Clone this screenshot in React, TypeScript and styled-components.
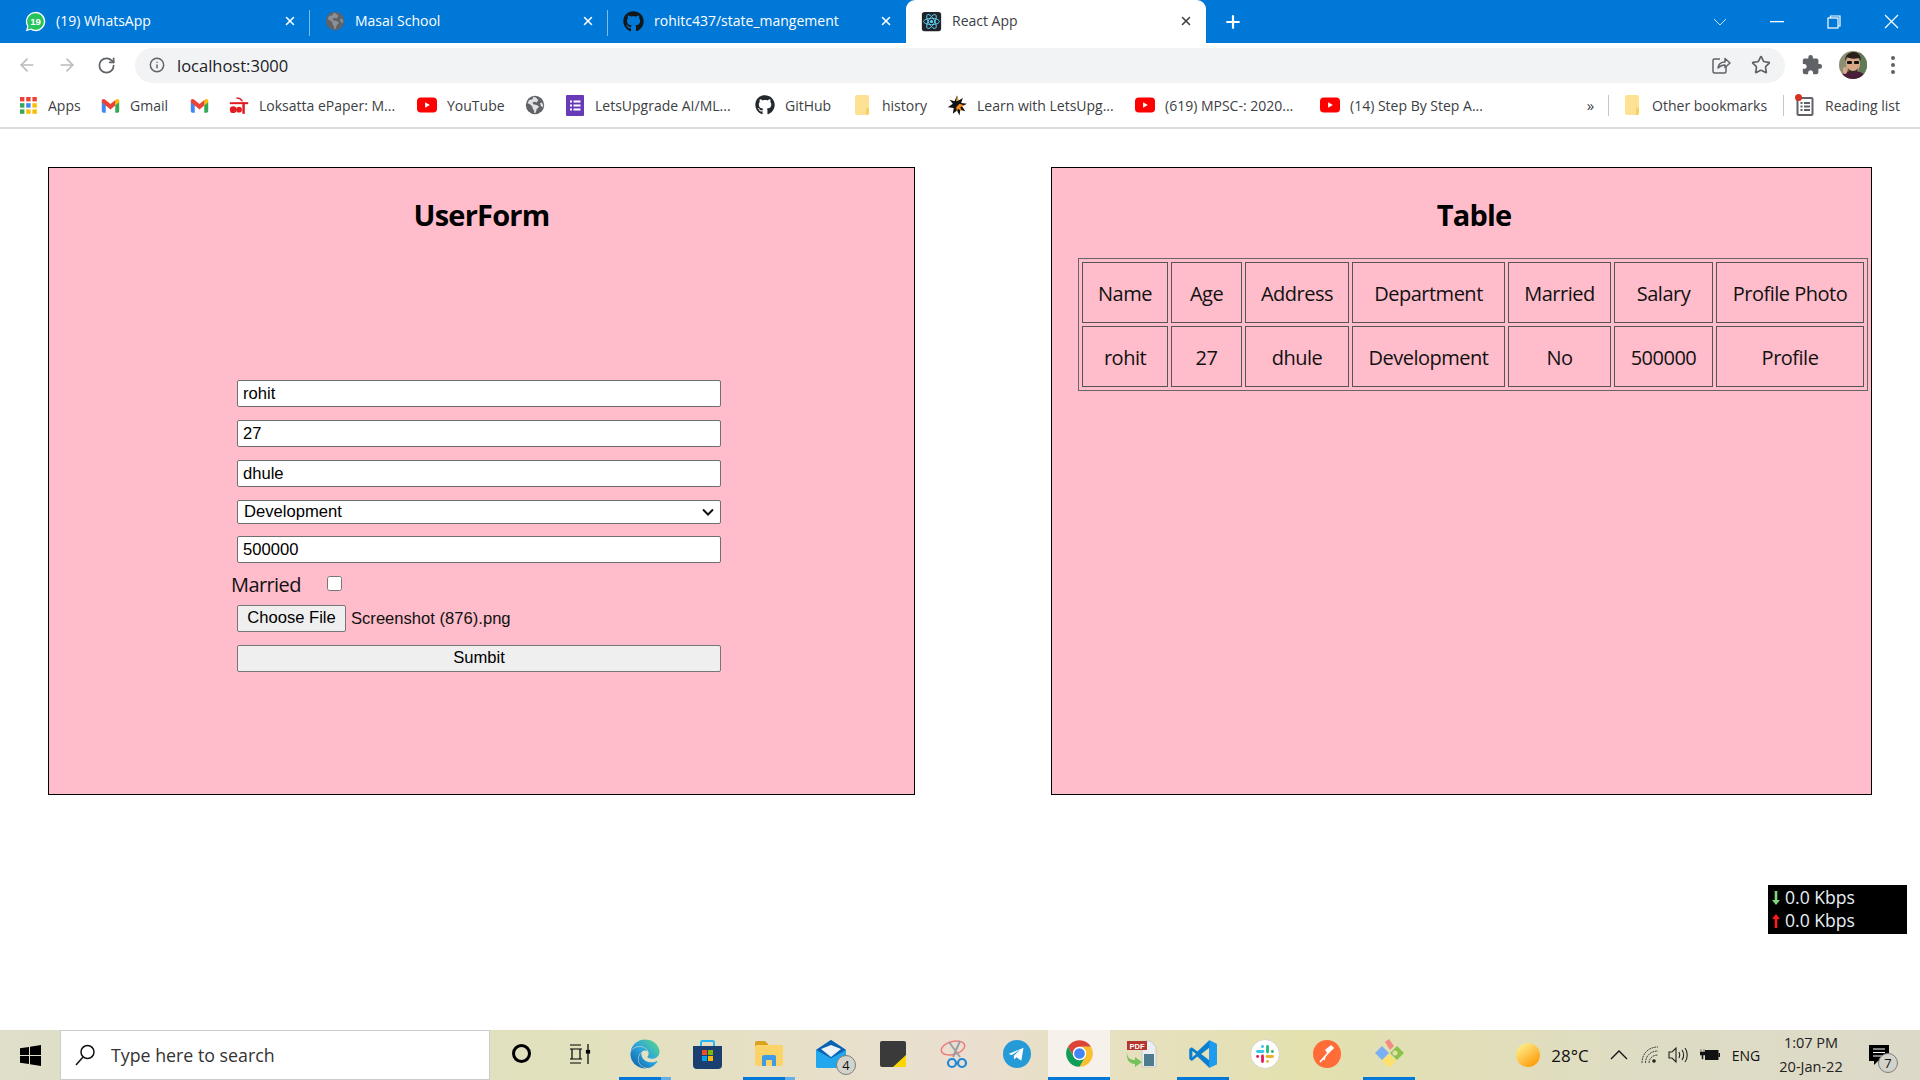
import React from "react";
import styled, { createGlobalStyle } from "styled-components";
import { ArrowLeft, ArrowRight, RotateCw, Info, Star, X, Plus } from "lucide-react";
import { FaGithub, FaEdge } from "react-icons/fa";
import { MdExtension } from "react-icons/md";

const UI = `"Open Sans", "Noto Sans", sans-serif`;
const ARIAL = `"Liberation Sans", Arial, sans-serif`;

const Global = createGlobalStyle`
  html, body { margin: 0; padding: 0; background: #fff; }
  * { box-sizing: border-box; }
`;

/* ---------- small drawn icons ---------- */

const WhatsAppIcon = () => (
  <svg width="21" height="21" viewBox="0 0 24 24">
    <path d="M12 1a11 11 0 0 0-9.400 16.600L1 23l5.600-1.500A11 11 0 1 0 12 1z" fill="#fff" />
    <path d="M12 2.500a9.500 9.500 0 0 0-8 14.600L3 21l3.900-1a9.500 9.500 0 1 0 5.100-17.500z" fill="#25c45d" />
    <text x="12" y="16" fontSize="11" fontWeight="700" fill="#fff" textAnchor="middle" fontFamily={ARIAL}>19</text>
  </svg>
);

const GlobeIcon = ({ land = "#dfe1e5" }: { land?: string }) => (
  <svg width="20" height="20" viewBox="0 0 24 24">
    <circle cx="12" cy="12" r="11" fill="#5f6368" />
    <path d="M10 2l-1 3-4 1-2 4 3 1 3 3v2l2 3v3l2-1 1-4 3-3-3-2-4-1-1-2 3-1 2 1 2-3-3-3zM20 9l-2 1 1 3 2 2 1-3z" fill={land} />
  </svg>
);

const ReactIcon = () => (
  <svg width="21" height="21" viewBox="0 0 24 24">
    <rect x="1" y="1" width="22" height="22" rx="3" fill="#20232a" />
    <circle cx="12" cy="12" r="1.800" fill="#61dafb" />
    <g fill="none" stroke="#61dafb" strokeWidth="1">
      <ellipse cx="12" cy="12" rx="9" ry="3.600" />
      <ellipse cx="12" cy="12" rx="9" ry="3.600" transform="rotate(60 12 12)" />
      <ellipse cx="12" cy="12" rx="9" ry="3.600" transform="rotate(120 12 12)" />
    </g>
  </svg>
);

const AppsIcon = () => {
  const colors = ["#ea4335", "#ea4335", "#ea4335", "#34a853", "#4285f4", "#fbbc05", "#34a853", "#fbbc05", "#fbbc05"];
  return (
    <svg width="17" height="17" viewBox="0 0 17 17">
      {colors.map((c, i) => (
        <rect key={i} x={(i % 3) * 6.2} y={Math.floor(i / 3) * 6.2} width="4.400" height="4.400" fill={c} />
      ))}
    </svg>
  );
};

const GmailIcon = () => (
  <svg width="19" height="15" viewBox="0 0 24 18">
    <path d="M1 4v12a2 2 0 0 0 2 2h3V8z" fill="#4285f4" />
    <path d="M23 4v12a2 2 0 0 1-2 2h-3V8z" fill="#34a853" />
    <path d="M18 2v7l5-4V3c0-2-2.500-3-4-1.500z" fill="#fbbc05" />
    <path d="M1 3c0-2 2.500-3 4-1.500L12 7l6-5v7l-6 5-11-9z" fill="#ea4335" />
  </svg>
);

const LoksattaIcon = () => (
  <svg width="21" height="19" viewBox="0 0 24 22">
    <g fill="#e31b23">
      <rect x="1" y="7" width="22" height="2.400" />
      <rect x="16" y="7" width="3" height="14" />
      <circle cx="5" cy="16" r="4" />
      <circle cx="12" cy="16" r="3.500" />
      <path d="M9 1c3 0 6 1 8 5h-2c-1.500-2-3-3-6-3z" />
    </g>
  </svg>
);

const YouTubeIcon = () => (
  <svg width="21" height="16" viewBox="0 0 21 16">
    <rect width="21" height="16" rx="4" fill="#f00" />
    <path d="M8.500 5l5 3-5 3z" fill="#fff" />
  </svg>
);

const FormsIcon = () => (
  <svg width="18" height="21" viewBox="0 0 18 21">
    <rect width="18" height="21" rx="1" fill="#673ab7" />
    <g fill="#fff">
      <rect x="4" y="5.500" width="2" height="2" />
      <rect x="7.500" y="5.500" width="7" height="2" />
      <rect x="4" y="9.500" width="2" height="2" />
      <rect x="7.500" y="9.500" width="7" height="2" />
      <rect x="4" y="13.500" width="2" height="2" />
      <rect x="7.500" y="13.500" width="7" height="2" />
    </g>
  </svg>
);

const FolderBookmark = () => (
  <svg width="16" height="20" viewBox="0 0 16 20">
    <path d="M1 2a2 2 0 0 1 2-2h10a2 2 0 0 1 2 2v16a2 2 0 0 1-2 2H3a2 2 0 0 1-2-2z" fill="#fde293" />
    <path d="M13 20a2 2 0 0 0 2-2v-6l-3 2v6z" fill="#f9cf60" />
  </svg>
);

const BurstIcon = () => (
  <svg width="23" height="23" viewBox="0 0 24 24">
    <path d="M12 0l2 6 5-3-2 6 7 1-6 3 4 6-6-2-1 7-3-6-5 4 1-7-7-1 6-4-4-5 6 2z" fill="#111" />
    <path d="M15 10l6 2-5 2 2 5-5-3-1 4-1-6 4-4z" fill="#f58a1f" />
    <path d="M12 0l2 6-3 1z" fill="#f4b63f" />
  </svg>
);

const ReadingListIcon = () => (
  <svg width="20" height="22" viewBox="0 0 20 22">
    <rect x="2.500" y="4" width="15" height="17" rx="1" fill="none" stroke="#5f6368" strokeWidth="2" />
    <g fill="#5f6368">
      <rect x="5.500" y="8" width="2" height="2" />
      <rect x="9" y="8" width="6" height="2" />
      <rect x="5.500" y="11.500" width="2" height="2" />
      <rect x="9" y="11.500" width="6" height="2" />
      <rect x="5.500" y="15" width="2" height="2" />
      <rect x="9" y="15" width="6" height="2" />
    </g>
    <circle cx="3.500" cy="3.500" r="3.500" fill="#d93025" />
  </svg>
);

const ShareIcon = () => (
  <svg width="20" height="20" viewBox="0 0 20 20" fill="none" stroke="#5f6368" strokeWidth="1.500">
    <path d="M9 4H3.500A1.500 1.500 0 0 0 2 5.500v11A1.500 1.500 0 0 0 3.500 18h10a1.500 1.500 0 0 0 1.500-1.500V12" />
    <path d="M7 13c.5-4 3-6 7-6V3.500L19 8l-5 4.500V10c-3 0-5 1-7 3z" strokeLinejoin="round" />
  </svg>
);

const AvatarIcon = () => (
  <svg width="28" height="28" viewBox="0 0 28 28">
    <defs>
      <clipPath id="avatarClip"><circle cx="14" cy="14" r="14" /></clipPath>
    </defs>
    <g clipPath="url(#avatarClip)">
      <rect width="28" height="28" fill="#8c8f72" />
      <rect x="20" width="8" height="28" fill="#5f7a55" />
      <path d="M2 28c0-6 5-8 12-8s12 2 12 8z" fill="#4a1e3a" />
      <ellipse cx="14" cy="13" rx="7" ry="9" fill="#d8a888" />
      <path d="M6 10c0-7 5-9 9-9s7 3 7 9l-2-3c-4 1-9 1-12-1z" fill="#2a1f1c" />
      <rect x="8" y="10" width="5" height="3" rx="1" fill="#111" />
      <rect x="15" y="10" width="5" height="3" rx="1" fill="#111" />
      <path d="M9 17c2 4 8 4 10 0l-1 5h-8z" fill="#3b2a25" />
      <rect x="4" y="16" width="4" height="7" rx="2" fill="#d8a888" />
    </g>
  </svg>
);

const SearchGlass = () => (
  <svg width="22" height="22" viewBox="0 0 22 22" fill="none" stroke="#111" strokeWidth="1.500">
    <circle cx="13.500" cy="8" r="6.500" />
    <path d="M9 13L2 21" />
  </svg>
);

const WindowsLogo = () => (
  <svg width="21" height="21" viewBox="0 0 21 21" fill="#000">
    <path d="M0 3.200L9 2v8H0zM10 1.800L21 0v10H10zM0 11h9v8l-9-1.200zM10 11h11v10l-11-1.800z" />
  </svg>
);

const CortanaIcon = () => (
  <svg width="21" height="21" viewBox="0 0 21 21">
    <circle cx="10.500" cy="10.500" r="8" fill="none" stroke="#000" strokeWidth="3" />
  </svg>
);

const TaskViewIcon = () => (
  <svg width="22" height="20" viewBox="0 0 22 20" fill="none" stroke="#000" strokeWidth="1.200">
    <path d="M1 1h11M1 19h11M3 5h8v10H3zM1 5h12M1 15h12" />
    <path d="M19 0v6M19 9v11" />
    <rect x="17.500" y="6.500" width="3" height="2.500" fill="#000" />
  </svg>
);

const EdgeIcon = styled(FaEdge)`
  width: 30px;
  height: 30px;
  fill: url(#edgeGrad);
`;

const StoreIcon = () => (
  <svg width="29" height="30" viewBox="0 0 29 30">
    <path d="M8 8V3.500A1.500 1.500 0 0 1 9.500 2h10A1.500 1.500 0 0 1 21 3.500V8" fill="none" stroke="#29b6f6" strokeWidth="2" />
    <path d="M0 7h29v19a4 4 0 0 1-4 4H4a4 4 0 0 1-4-4z" fill="#1a3f70" />
    <rect x="9" y="11" width="5" height="5" fill="#f25022" />
    <rect x="15" y="11" width="5" height="5" fill="#7fba00" />
    <rect x="9" y="17" width="5" height="5" fill="#00a4ef" />
    <rect x="15" y="17" width="5" height="5" fill="#ffb900" />
  </svg>
);

const ExplorerIcon = () => (
  <svg width="28" height="25" viewBox="0 0 28 25">
    <path d="M0 2a2 2 0 0 1 2-2h8l3 3v3H0z" fill="#dba121" />
    <rect y="4" width="28" height="21" rx="2" fill="#fbd367" />
    <path d="M7 25v-9a2 2 0 0 1 2-2h10a2 2 0 0 1 2 2v9h-4v-6h-6v6z" fill="#3f9be4" />
  </svg>
);

const MailIcon = () => (
  <svg width="30" height="28" viewBox="0 0 30 28">
    <path d="M0 10L15 0l15 10v16a2 2 0 0 1-2 2H2a2 2 0 0 1-2-2z" fill="#1c97e6" />
    <path d="M0 10L15 0l15 10-15 8z" fill="#0b62b1" />
    <path d="M5 9l10-4 10 4-10 8z" fill="#eef3f8" />
    <path d="M0 10l15 9 15-9v16a2 2 0 0 1-2 2H2a2 2 0 0 1-2-2z" fill="#21a7ee" />
  </svg>
);

const NotesIcon = () => (
  <svg width="26" height="26" viewBox="0 0 26 26">
    <rect width="26" height="26" rx="2" fill="#3a3a3a" />
    <path d="M26 14v12H13z" fill="#ffd500" />
  </svg>
);

const SnipIcon = () => (
  <svg width="30" height="30" viewBox="0 0 30 30" fill="none">
    <ellipse cx="13" cy="9" rx="12" ry="6.500" stroke="#f07a7a" strokeWidth="1.500" transform="rotate(-15 13 9)" />
    <path d="M9 3l11 15M20 2l-7 16" stroke="#9aa0a6" strokeWidth="2" />
    <circle cx="22" cy="24" r="4" stroke="#1e88d8" strokeWidth="2.200" />
    <circle cx="12" cy="24" r="4" stroke="#1e88d8" strokeWidth="2.200" />
  </svg>
);

const TelegramIcon = () => (
  <svg width="28" height="28" viewBox="0 0 28 28">
    <circle cx="14" cy="14" r="14" fill="#249ad6" />
    <path d="M5.500 14l15-6.200-2.200 13-4.800-3.500-2.300 2.200-.4-3.800 6.500-6-8.400 5.200z" fill="#fff" />
  </svg>
);

const ChromeIcon = () => (
  <svg width="29" height="29" viewBox="0 0 24 24">
    <path d="M12 1a11 11 0 0 1 9.530 5.500H12a5.500 5.500 0 0 0-4.760 8.250L2.470 6.500A11 11 0 0 1 12 1z" fill="#db4437" />
    <path d="M21.530 6.500A11 11 0 0 1 12 23l4.760-8.250A5.500 5.500 0 0 0 12 6.500z" fill="#fbc02d" />
    <path d="M12 23A11 11 0 0 1 2.470 6.500l4.770 8.250a5.500 5.500 0 0 0 9.520 0z" fill="#0f9d58" />
    <circle cx="12" cy="12" r="5.500" fill="#fff" />
    <circle cx="12" cy="12" r="4.400" fill="#4285f4" />
  </svg>
);

const PdfIcon = () => (
  <svg width="31" height="28" viewBox="0 0 31 28">
    <path d="M16 1h9l5 6v20H16z" fill="#e9eef0" stroke="#bbb" strokeWidth=".6" />
    <rect x="18" y="14" width="10" height="12" fill="#4d7d8c" />
    <rect x="1" y="1" width="20" height="9" fill="#b5342e" />
    <text x="11" y="8.500" fontSize="7.500" fontWeight="700" fill="#fff" textAnchor="middle" fontFamily={ARIAL}>PDF</text>
    <path d="M1 12c0 6 3 8 8 8v-3l7 5-7 5v-3c-6 0-9-5-8-12z" fill="#76c25a" />
  </svg>
);

const VsCodeIcon = () => (
  <svg width="30" height="30" viewBox="0 0 24 24">
    <path
      fillRule="evenodd"
      d="M17 1l6 2.900v16.200L17 23l-9.500-9L3 17.500 1 16V8l2-1.500L7.500 10zM17 7l-6.500 5 6.500 5zM3.500 9.500v5L6.500 12z"
      fill="#0a7fd0"
    />
    <path d="M17 1l6 2.900v16.200L17 23z" fill="#1f9cf0" />
  </svg>
);

const SlackIcon = () => (
  <svg width="30" height="30" viewBox="0 0 30 30">
    <circle cx="15" cy="15" r="14.500" fill="#fff" stroke="#d5d5c5" />
    <g fill="none" strokeWidth="2.800" strokeLinecap="round">
      <path d="M7.500 12.500h5.500M12.500 7.500v.2" stroke="#36c5f0" />
      <path d="M17.500 7.500v5.500M22.500 12.500h-.2" stroke="#2eb67d" />
      <path d="M22.500 17.500H17M17.500 22.500v-.2" stroke="#ecb22e" />
      <path d="M12.500 22.500V17M7.500 17.500h.2" stroke="#e01e5a" />
    </g>
  </svg>
);

const PostmanIcon = () => (
  <svg width="28" height="28" viewBox="0 0 28 28">
    <circle cx="14" cy="14" r="14" fill="#ff6c37" />
    <path d="M7 22l8-9M13 10l5-4 2 2-5 5zM12 16l-1 4" stroke="#fff" strokeWidth="1.600" fill="#fff" />
  </svg>
);

const KrakenIcon = () => (
  <svg width="31" height="31" viewBox="0 0 31 31">
    <path d="M1 15l7-7 7 7-7 7z" fill="#7cb0f5" />
    <path d="M8 23l7-7 7 7-7 7z" fill="#fbe26f" />
    <path d="M16 15l7-7 7 7-7 7z" fill="#8bc34a" />
    <circle cx="21" cy="15" r="2.500" fill="#e3e1aa" />
    <path d="M11 4l4-3 5 7-4 4z" fill="#f28b82" />
  </svg>
);

const SunIcon = () => (
  <svg width="24" height="24" viewBox="0 0 24 24">
    <defs>
      <linearGradient id="sunGrad" x1="0.2" y1="0.1" x2="0.8" y2="0.9">
        <stop offset="0" stopColor="#fdeb85" />
        <stop offset="1" stopColor="#fe9d0c" />
      </linearGradient>
    </defs>
    <circle cx="12" cy="12" r="12" fill="url(#sunGrad)" />
  </svg>
);

const CaretIcon = () => (
  <svg width="18" height="10" viewBox="0 0 18 10" fill="none" stroke="#111" strokeWidth="1.300">
    <path d="M1 9l8-8 8 8" />
  </svg>
);

const WifiIcon = () => (
  <svg width="18" height="18" viewBox="0 0 18 18" fill="none" stroke="#444" strokeWidth="1">
    <path d="M1 17c0-9 6-16 16-16M4.500 17c0-6 4-12 12.500-12M8 17c0-4 3-8 9-8" strokeDasharray="2 .7" />
    <circle cx="13" cy="15" r="1.800" fill="#222" stroke="none" />
  </svg>
);

const SpeakerIcon = () => (
  <svg width="20" height="18" viewBox="0 0 20 18" fill="none" stroke="#222" strokeWidth="1.100">
    <path d="M1 6h3l4-4v14l-4-4H1zM11 6c1 2 1 4 0 6M14 4c2 3 2 7 0 10M17 2c3 4 3 10 0 14" />
  </svg>
);

const BatteryIcon = () => (
  <svg width="20" height="14" viewBox="0 0 20 14">
    <rect x="5.500" y="2.500" width="12.500" height="9" fill="#111" stroke="#111" />
    <rect x="18.500" y="5" width="1.500" height="4" fill="#111" />
    <path d="M1 1v3M4 1v3M0 4h5v3H3v4H2V7H0z" fill="#111" stroke="#111" strokeWidth=".5" />
  </svg>
);

const NotifyIcon = () => (
  <svg width="20" height="20" viewBox="0 0 20 20">
    <path d="M0 0h20v16H9l-4 4v-4H0z" fill="#000" />
    <path d="M4 4h12M4 7.500h12M4 11h12" stroke="#fff" strokeWidth="1.200" />
  </svg>
);

const SpeedArrow = ({ color, up }: { color: string; up?: boolean }) => (
  <svg width="8" height="14" viewBox="0 0 8 14" fill={color}>
    <path d={up ? "M4 0l4 5H5.300v9H2.700V5H0z" : "M4 14l4-5H5.300V0H2.700v9H0z"} />
  </svg>
);

/* ---------- browser chrome ---------- */

const TabStrip = styled.div`
  height: 43px;
  background: #0078d7;
  display: flex;
  align-items: flex-end;
  padding-left: 10px;
  font-family: ${UI};
`;
const Tab = styled.div<{ $active?: boolean; $w: number; $sep?: boolean }>`
  width: ${(p) => p.$w}px;
  height: 43px;
  display: flex;
  align-items: center;
  padding: 0 13px 1px 15px;
  gap: 10px;
  color: ${(p) => (p.$active ? "#3c4043" : "#fff")};
  background: ${(p) => (p.$active ? "#fff" : "transparent")};
  border-radius: ${(p) => (p.$active ? "9px 9px 0 0" : "0")};
  position: relative;
  &::after {
    content: "";
    display: ${(p) => (p.$sep ? "block" : "none")};
    position: absolute;
    right: 0;
    top: 10px;
    height: 26px;
    width: 1px;
    background: #7fbbeb;
  }
`;
const TabTitle = styled.span`
  flex: 1;
  font-size: 14px;
  line-height: 18px;
  margin-top: -1px;
  white-space: nowrap;
`;
const NewTab = styled.div`
  width: 54px;
  display: flex;
  justify-content: center;
  align-items: center;
  height: 43px;
  color: #fff;
`;
const WindowButtons = styled.div`
  margin-left: auto;
  height: 43px;
  display: flex;
  align-items: center;
  color: #fff;
`;
const WinBtn = styled.div<{ $w: number }>`
  width: ${(p) => p.$w}px;
  display: flex;
  justify-content: center;
`;
const Toolbar = styled.div`
  height: 44px;
  background: #fff;
  display: flex;
  align-items: center;
  padding-left: 17px;
  font-family: ${UI};
`;
const NavBtn = styled.div`
  width: 40px;
  display: flex;
  justify-content: flex-start;
`;
const Omnibox = styled.div`
  width: 1650px;
  height: 35px;
  margin-left: -2px;
  border-radius: 18px;
  background: #f1f3f4;
  display: flex;
  align-items: center;
  padding: 0 14px;
  color: #202124;
  font-size: 16.500px;
`;
const OmniText = styled.span`
  margin-left: 12px;
  flex: 1;
`;
const OmniIcons = styled.div`
  display: flex;
  align-items: center;
  gap: 20px;
`;
const ToolIcons = styled.div`
  display: flex;
  align-items: center;
  margin-left: 16px;
  gap: 16px;
`;
const Dots = styled.div`
  display: flex;
  flex-direction: column;
  gap: 3px;
  margin-left: 24px;
  & > i {
    width: 4px;
    height: 4px;
    border-radius: 50%;
    background: #5f6368;
  }
`;
const BookmarkBar = styled.div`
  height: 42px;
  background: #fff;
  border-bottom: 2px solid #dcdcdc;
  display: flex;
  align-items: center;
  padding: 0 20px 4px 18px;
  font-family: ${UI};
  font-size: 14px;
  color: #3c4043;
`;
const Bookmark = styled.div<{ $w?: number }>`
  width: ${(p) => (p.$w ? `${p.$w}px` : "auto")};
  display: flex;
  align-items: center;
  gap: 10px;
  white-space: nowrap;
`;
const BmIcon = styled.span`
  width: 20px;
  height: 22px;
  display: flex;
  align-items: center;
  justify-content: center;
  flex: none;
`;
const Chevrons = styled.span`
  margin-left: auto;
  font-size: 15px;
  margin-right: 14px;
`;
const BmSep = styled.span<{ $ml?: number; $mr: number }>`
  width: 1px;
  height: 21px;
  background: #c4c7c9;
  margin-left: ${(p) => p.$ml ?? 0}px;
  margin-right: ${(p) => p.$mr}px;
`;

/* ---------- page ---------- */

const Page = styled.div`
  width: 1920px;
  height: 1080px;
  overflow: hidden;
  display: flex;
  flex-direction: column;
  position: relative;
`;
const Main = styled.main`
  flex: 1;
  display: flex;
  align-items: flex-start;
  gap: 136px;
  padding: 38px 0 0 48px;
`;
const Panel = styled.section<{ $w: number }>`
  width: ${(p) => p.$w}px;
  height: 628px;
  background: #ffbccb;
  border: 1px solid #000;
  padding-top: 27px;
`;
const Title = styled.h1`
  margin: 0;
  height: 40px;
  line-height: 40px;
  text-align: center;
  font-family: ${UI};
  font-size: 29px;
  font-weight: 700;
  letter-spacing: -0.8px;
  color: #000;
`;
const Form = styled.form`
  width: 484px;
  margin: 145px 0 0 188px;
  display: flex;
  flex-direction: column;
  font-family: ${ARIAL};
  font-size: 16.6px;
`;
const TextInput = styled.input<{ $mb: number }>`
  height: 27px;
  width: 100%;
  margin: 0 0 ${(p) => p.$mb}px;
  padding: 0 5px;
  border: 1px solid #6f6f6f;
  border-radius: 2px;
  background: #fff;
  font: inherit;
  color: #000;
  outline: none;
`;
const Select = styled.select`
  appearance: none;
  height: 24px;
  width: 100%;
  margin-bottom: 12px;
  padding: 0 5px 2px 6px;
  border: 1px solid #6f6f6f;
  border-radius: 2px;
  background-color: #fff;
  background-image: url("data:image/svg+xml,%3Csvg xmlns='http://www.w3.org/2000/svg' width='12' height='8'%3E%3Cpath d='M1 1.500l5 5 5-5' fill='none' stroke='%23111' stroke-width='2'/%3E%3C/svg%3E");
  background-repeat: no-repeat;
  background-position: right 6px center;
  font: inherit;
  color: #000;
`;
const MarriedRow = styled.label`
  height: 26px;
  margin: 0 0 7px -6px;
  padding-bottom: 2px;
  display: flex;
  align-items: center;
  font-family: ${UI};
  font-size: 20px;
  letter-spacing: -0.6px;
  color: #111;
`;
const Check = styled.input`
  width: 15px;
  height: 15px;
  margin: 0 0 1px 26px;
`;
const FileRow = styled.div`
  height: 27px;
  margin-bottom: 13px;
  display: flex;
  align-items: center;
  gap: 5px;
  color: #111;
`;
const FormButton = styled.button<{ $w?: number }>`
  height: 27px;
  width: ${(p) => (p.$w ? `${p.$w}px` : "100%")};
  padding: 0 0 2px;
  border: 1px solid #767676;
  border-radius: 2px;
  background: #efefef;
  font: inherit;
  color: #000;
`;
const TableWrap = styled.div`
  padding: 0 1px 0 26px;
`;
const DataTable = styled.table`
  width: 790px;
  margin-top: 23px;
  table-layout: fixed;
  border-collapse: separate;
  border-spacing: 3px;
  border: 1px solid #666;
  font-family: ${UI};
  font-size: 20px;
  letter-spacing: -0.5px;
  color: #111;
`;
const Col = styled.col<{ $w: number }>`
  width: ${(p) => p.$w}px;
`;
const Cell = styled.td`
  height: 61px;
  padding: 1px 0 0;
  border: 1px solid #555;
  text-align: center;
  white-space: nowrap;
`;
const SpeedBox = styled.div`
  position: absolute;
  left: 1768px;
  top: 885px;
  width: 139px;
  height: 49px;
  background: #000;
  padding: 1px 0 0 4px;
  font-family: ${UI};
  font-size: 17.600px;
  line-height: 23px;
  color: #e7eef5;
  display: flex;
  flex-direction: column;
`;
const SpeedRow = styled.div`
  display: flex;
  align-items: center;
  gap: 5px;
`;

/* ---------- taskbar ---------- */

const Taskbar = styled.footer`
  height: 50px;
  display: flex;
  align-items: center;
  font-family: ${UI};
  color: #111;
  background: linear-gradient(90deg, #dfdfca 0%, #e2e1bd 30%, #eadfd0 50%, #e3e1ae 68%, #dfdcc4 85%, #dcd9c9 100%);
`;
const StartBtn = styled.div`
  width: 60px;
  display: flex;
  justify-content: center;
`;
const SearchBox = styled.div`
  width: 430px;
  height: 50px;
  background: #fff;
  border: 1px solid #ccc;
  display: flex;
  align-items: center;
  gap: 15px;
  padding-left: 13px;
  font-size: 17.800px;
  color: #333;
`;
const TaskSlot = styled.div<{ $active?: boolean; $line?: "full" | "split"; $shift?: number }>`
  position: relative;
  width: 62px;
  height: 50px;
  display: flex;
  align-items: center;
  justify-content: center;
  padding: 0 ${(p) => p.$shift ?? 0}px 3px 0;
  background: ${(p) => (p.$active ? "#f6f1ea" : "transparent")};
  &::after {
    content: "";
    display: ${(p) => (p.$line ? "block" : "none")};
    position: absolute;
    bottom: 0;
    left: ${(p) => (p.$active ? "0" : "5px")};
    right: ${(p) => (p.$active ? "0" : "5px")};
    height: 3px;
    background: ${(p) =>
      p.$line === "split" ? "linear-gradient(90deg, #0078d7 80%, #66aee7 80%)" : "#0078d7"};
  }
`;
const Tray = styled.div`
  margin-left: auto;
  display: flex;
  align-items: center;
  height: 50px;
`;
const TraySlot = styled.div<{ $w: number; $size?: number }>`
  width: ${(p) => p.$w}px;
  display: flex;
  justify-content: center;
  align-items: center;
  font-size: ${(p) => p.$size ?? 14}px;
  position: relative;
`;
const Clock = styled.div`
  width: 82px;
  text-align: center;
  font-size: 14.500px;
  line-height: 24px;
  color: #222;
`;
const Badge = styled.span<{ $x: number; $y: number }>`
  position: absolute;
  left: ${(p) => p.$x}px;
  top: ${(p) => p.$y}px;
  width: 20px;
  height: 20px;
  border-radius: 50%;
  border: 1px solid #7d7d7d;
  background: #d3d3cb;
  color: #111;
  font-size: 13px;
  line-height: 18px;
  text-align: center;
`;
const Trailing = styled.div`
  width: 14px;
`;

const tabs = [
  { title: "(19) WhatsApp", icon: <WhatsAppIcon />, w: 300, sep: true },
  { title: "Masai School", icon: <GlobeIcon land="#8a9096" />, w: 298, sep: true },
  { title: "rohitc437/state_mangement", icon: <FaGithub size={21} color="#14171a" />, w: 298 },
  { title: "React App", icon: <ReactIcon />, w: 300, active: true },
];

const bookmarks = [
  { label: "Apps", icon: <AppsIcon />, w: 82 },
  { label: "Gmail", icon: <GmailIcon />, w: 89 },
  { label: "", icon: <GmailIcon />, w: 40 },
  { label: "Loksatta ePaper: M...", icon: <LoksattaIcon />, w: 188 },
  { label: "YouTube", icon: <YouTubeIcon />, w: 108 },
  { label: "", icon: <GlobeIcon />, w: 40 },
  { label: "LetsUpgrade AI/ML...", icon: <FormsIcon />, w: 190 },
  { label: "GitHub", icon: <FaGithub size={20} color="#24292e" />, w: 97 },
  { label: "history", icon: <FolderBookmark />, w: 95 },
  { label: "Learn with LetsUpg...", icon: <BurstIcon />, w: 188 },
  { label: "(619) MPSC-: 2020...", icon: <YouTubeIcon />, w: 185 },
  { label: "(14) Step By Step A...", icon: <YouTubeIcon /> },
];

const headers = ["Name", "Age", "Address", "Department", "Married", "Salary", "Profile Photo"];
const row = ["rohit", "27", "dhule", "Development", "No", "500000", "Profile"];
const colWidths = [86, 71, 104, 153, 103, 99, 148];

const taskItems: {
  icon: React.ReactNode;
  line?: "full" | "split";
  active?: boolean;
  badge?: string;
  shift?: number;
}[] = [
  { icon: <CortanaIcon /> },
  { icon: <TaskViewIcon />, shift: 7 },
  { icon: <EdgeIcon />, line: "split" },
  { icon: <StoreIcon /> },
  { icon: <ExplorerIcon />, line: "split" },
  { icon: <MailIcon />, badge: "4" },
  { icon: <NotesIcon /> },
  { icon: <SnipIcon /> },
  { icon: <TelegramIcon /> },
  { icon: <ChromeIcon />, line: "full", active: true },
  { icon: <PdfIcon /> },
  { icon: <VsCodeIcon />, line: "full" },
  { icon: <SlackIcon /> },
  { icon: <PostmanIcon /> },
  { icon: <KrakenIcon />, line: "full" },
];

export default function App() {
  return (
    <Page>
      <Global />
      <svg width="0" height="0" style={{ position: "absolute" }}>
        <defs>
          <linearGradient id="edgeGrad" x1="0" y1="1" x2="1" y2="0">
            <stop offset="0" stopColor="#0c59a4" />
            <stop offset="0.5" stopColor="#2aa3df" />
            <stop offset="1" stopColor="#5fdc7e" />
          </linearGradient>
        </defs>
      </svg>

      <TabStrip>
        {tabs.map((t) => (
          <Tab key={t.title} $w={t.w} $active={t.active} $sep={t.sep}>
            {t.icon}
            <TabTitle>{t.title}</TabTitle>
            <X size={14} strokeWidth={2.6} />
          </Tab>
        ))}
        <NewTab>
          <Plus size={20} strokeWidth={2.6} />
        </NewTab>
        <WindowButtons>
          <WinBtn $w={57}>
            <svg width="14" height="8" viewBox="0 0 14 8" fill="none" stroke="#cfe4f6" strokeWidth="1">
              <path d="M1 1l6 6 6-6" />
            </svg>
          </WinBtn>
          <WinBtn $w={57}>
            <svg width="14" height="2" viewBox="0 0 14 2">
              <rect width="14" height="1.300" fill="#fff" />
            </svg>
          </WinBtn>
          <WinBtn $w={57}>
            <svg width="14" height="14" viewBox="0 0 14 14" fill="none" stroke="#fff" strokeWidth="1.200">
              <rect x="1" y="3" width="10" height="10" />
              <path d="M3.500 3V1h9.500v10h-2" />
            </svg>
          </WinBtn>
          <WinBtn $w={58}>
            <svg width="15" height="15" viewBox="0 0 15 15" stroke="#fff" strokeWidth="1.200">
              <path d="M1 1l13 13M14 1L1 14" />
            </svg>
          </WinBtn>
        </WindowButtons>
      </TabStrip>

      <Toolbar>
        <NavBtn><ArrowLeft size={20} color="#b9bbbe" /></NavBtn>
        <NavBtn><ArrowRight size={20} color="#b9bbbe" /></NavBtn>
        <NavBtn><RotateCw size={19} color="#5f6368" strokeWidth={2.2} /></NavBtn>
        <Omnibox>
          <Info size={16} color="#5f6368" strokeWidth={2.2} />
          <OmniText>localhost:3000</OmniText>
          <OmniIcons>
            <ShareIcon />
            <Star size={20} color="#5f6368" strokeWidth={2} />
          </OmniIcons>
        </Omnibox>
        <ToolIcons>
          <MdExtension size={22} color="#5f6368" />
          <AvatarIcon />
        </ToolIcons>
        <Dots><i /><i /><i /></Dots>
      </Toolbar>

      <BookmarkBar>
        {bookmarks.map((b, i) => (
          <Bookmark key={i} $w={b.w}>
            <BmIcon>{b.icon}</BmIcon>
            {b.label}
          </Bookmark>
        ))}
        <Chevrons>»</Chevrons>
        <BmSep $mr={13} />
        <Bookmark>
          <BmIcon><FolderBookmark /></BmIcon>
          Other bookmarks
        </Bookmark>
        <BmSep $ml={16} $mr={11} />
        <Bookmark>
          <BmIcon><ReadingListIcon /></BmIcon>
          Reading list
        </Bookmark>
      </BookmarkBar>

      <Main>
        <Panel $w={867}>
          <Title>UserForm</Title>
          <Form onSubmit={(e) => e.preventDefault()}>
            <TextInput $mb={13} defaultValue="rohit" />
            <TextInput $mb={13} defaultValue="27" />
            <TextInput $mb={13} defaultValue="dhule" />
            <Select defaultValue="Development">
              <option>Development</option>
              <option>Marketing</option>
              <option>Sales</option>
            </Select>
            <TextInput $mb={9} defaultValue="500000" />
            <MarriedRow>
              Married
              <Check type="checkbox" />
            </MarriedRow>
            <FileRow>
              <FormButton type="button" $w={109}>Choose File</FormButton>
              Screenshot (876).png
            </FileRow>
            <FormButton type="submit">Sumbit</FormButton>
          </Form>
        </Panel>

        <Panel $w={821}>
          <TableWrap>
            <Title>Table</Title>
            <DataTable>
              <colgroup>
                {colWidths.map((w, i) => (
                  <Col key={i} $w={w} />
                ))}
              </colgroup>
              <tbody>
                <tr>
                  {headers.map((h) => (
                    <Cell key={h}>{h}</Cell>
                  ))}
                </tr>
                <tr>
                  {row.map((c) => (
                    <Cell key={c}>{c}</Cell>
                  ))}
                </tr>
              </tbody>
            </DataTable>
          </TableWrap>
        </Panel>
      </Main>

      <SpeedBox>
        <SpeedRow><SpeedArrow color="#7fd67f" />0.0 Kbps</SpeedRow>
        <SpeedRow><SpeedArrow color="#ff1a1a" up />0.0 Kbps</SpeedRow>
      </SpeedBox>

      <Taskbar>
        <StartBtn><WindowsLogo /></StartBtn>
        <SearchBox>
          <SearchGlass />
          Type here to search
        </SearchBox>
        {taskItems.map((t, i) => (
          <TaskSlot key={i} $active={t.active} $line={t.line} $shift={t.shift}>
            {t.icon}
            {t.badge && <Badge $x={36} $y={25}>{t.badge}</Badge>}
          </TaskSlot>
        ))}
        <Tray>
          <TraySlot $w={31}><SunIcon /></TraySlot>
          <TraySlot $w={54} $size={17}>28°C</TraySlot>
          <TraySlot $w={44}><CaretIcon /></TraySlot>
          <TraySlot $w={18}><WifiIcon /></TraySlot>
          <TraySlot $w={38}><SpeakerIcon /></TraySlot>
          <TraySlot $w={25}><BatteryIcon /></TraySlot>
          <TraySlot $w={48}>ENG</TraySlot>
          <Clock>
            1:07 PM
            <br />
            20-Jan-22
          </Clock>
          <TraySlot $w={54}>
            <NotifyIcon />
            <Badge $x={26} $y={8}>7</Badge>
          </TraySlot>
          <Trailing />
        </Tray>
      </Taskbar>
    </Page>
  );
}
